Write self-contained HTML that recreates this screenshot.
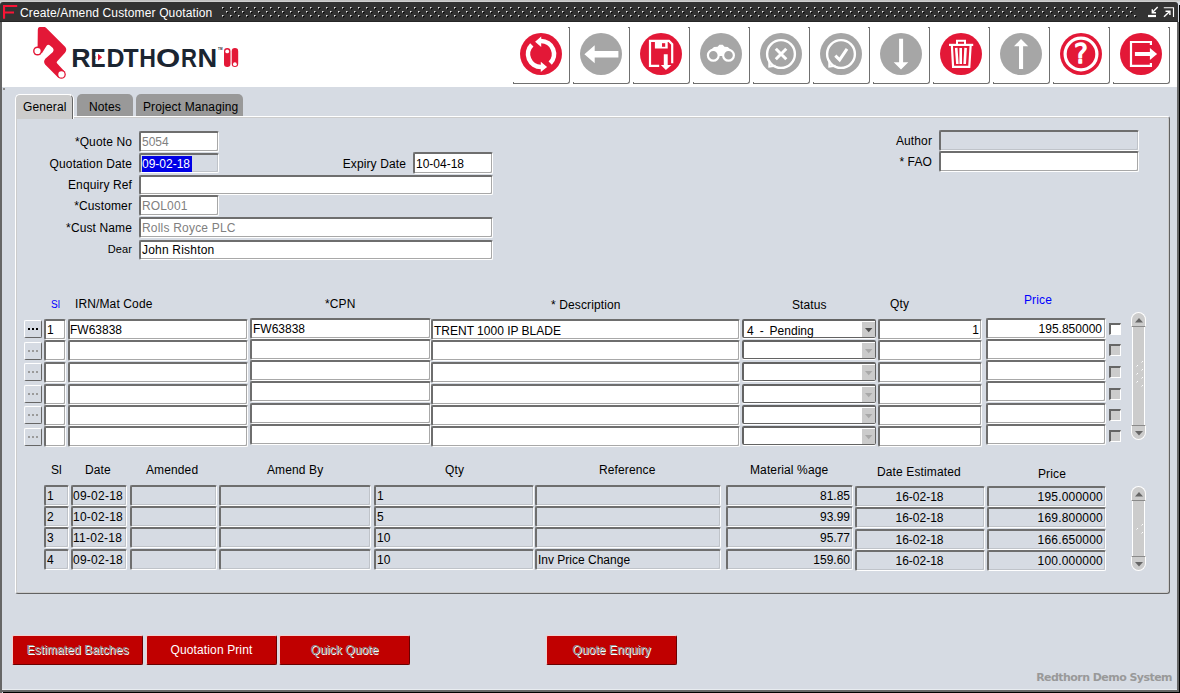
<!DOCTYPE html>
<html lang="en"><head><meta charset="utf-8"><title>Create/Amend Customer Quotation</title>
<style>
*{box-sizing:border-box}
html,body{margin:0;padding:0}
body{width:1180px;height:693px;overflow:hidden;position:relative;background:#d6dbe3;font-family:"Liberation Sans",Arial,sans-serif;font-size:12px;color:#000;letter-spacing:0.12px}
.a{position:absolute}
.t{position:absolute;white-space:pre;line-height:14px;height:14px}
.r{text-align:right}
.c{text-align:center}
.f{position:absolute;background:#fff;border-style:solid;border-width:2px 1px 1px 2px;border-color:#6e6e6e #fff #fff #6e6e6e;border-radius:2px;box-shadow:inset -1px -1px 0 #a8a8a8;white-space:pre;line-height:14px;padding:2px 0 0 1px;overflow:hidden;letter-spacing:0}
.g{box-shadow:inset -1px -1px 0 #bfc3c9}
.g{background:#d6dbe3}
.dis{color:#808080}
.tb{position:absolute;top:27px;width:57px;height:57px;border-right:1px solid #707070;border-bottom:1px solid #707070;border-bottom-right-radius:3px;background:#fff}
.tb svg{position:absolute;left:7px;top:6px}
.tb:before{content:'';position:absolute;right:0;top:0;width:1px;height:1px;background:#707070}
.tb:after{content:'';position:absolute;left:0;bottom:0;width:1px;height:1px;background:#707070}
.rb{position:absolute;top:635px;height:30px;width:131px;background:#c00000;color:#fff;text-align:center;line-height:28px;border-style:solid;border-width:1px;border-color:#f4d0d0 #6a0000 #6a0000 #f4d0d0;border-radius:2px}
.bl{color:#00f}
</style></head>
<body>
<div class="a" style="left:0;top:0;width:1180px;height:2px;background:linear-gradient(#bcbcbc,#d6d6d6)"></div>
<div class="a" style="left:0;top:2px;width:1178px;height:20px;background:#333;border-top-left-radius:3px;border-top-right-radius:3px"></div>
<svg class="a" style="left:222px;top:7px" width="916" height="12"><defs><pattern id="dp" width="8" height="8" patternUnits="userSpaceOnUse"><rect x="0" y="0" width="1" height="1" fill="#ececec"/><rect x="1" y="0" width="1" height="1" fill="#8c8c8c"/><rect x="0" y="1" width="1" height="1" fill="#8c8c8c"/><rect x="1" y="1" width="1" height="1" fill="#000"/><rect x="2" y="1" width="1" height="1" fill="#1c1c1c"/><rect x="1" y="2" width="1" height="1" fill="#1c1c1c"/><rect x="4" y="4" width="1" height="1" fill="#ececec"/><rect x="5" y="4" width="1" height="1" fill="#8c8c8c"/><rect x="4" y="5" width="1" height="1" fill="#8c8c8c"/><rect x="5" y="5" width="1" height="1" fill="#000"/><rect x="6" y="5" width="1" height="1" fill="#1c1c1c"/><rect x="5" y="6" width="1" height="1" fill="#1c1c1c"/></pattern></defs><rect width="915" height="11" fill="url(#dp)"/></svg>
<div class="a" style="left:0;top:21px;width:1178px;height:1px;background:#262626"></div>
<svg class="a" style="left:3px;top:5px" width="15" height="15"><path d="M1 13.8V1H14.2M1 7.5H11" fill="none" stroke="#fa1436" stroke-width="2.2"/></svg>
<div class="t" style="left:20px;top:6px;color:#fff;letter-spacing:0.14px">Create/Amend Customer Quotation</div>
<svg class="a" style="left:1148px;top:5px" width="28" height="14"><g stroke="#fff" fill="none"><path d="M9.7 2.1L4.6 7.3" stroke-width="1.4"/><path d="M4.3 4.3V7.7H8" stroke-width="1.4"/><path d="M0 11H8" stroke-width="2.2"/><path d="M15.8 2.7H25.5V11.9" stroke-width="1.15"/><path d="M16 11.7L21.6 6.5" stroke-width="1.4"/><path d="M17.5 6.2H21.9V9.9" stroke-width="1.4"/></g></svg>
<div class="a" style="left:0;top:22px;width:2px;height:671px;background:#666"></div>
<div class="a" style="left:1177px;top:22px;width:2px;height:671px;background:#666"></div>
<div class="a" style="left:1179px;top:5px;width:1px;height:688px;background:#000"></div>
<div class="a" style="left:2px;top:689px;width:1175px;height:1px;background:#e8ecf0"></div>
<div class="a" style="left:1px;top:690px;width:1178px;height:2px;background:#666"></div>
<div class="a" style="left:3px;top:692px;width:1177px;height:1px;background:#000"></div>
<div class="a" style="left:3px;top:88px;width:2px;height:2px;background:#8a8a8a"></div>
<div class="a" style="left:2px;top:22px;width:1175px;height:65px;background:#fff"></div>
<svg class="a" style="left:25px;top:22px" width="220" height="62" viewBox="0 0 220 62"><path d="M14.6 5L19.6 5Q20.3 5 21 5.8L40.3 25.1Q42.4 28 40 30.7L32 39.4Q31.3 40.3 32 41.2L39.6 49.6L33.3 55.8L20.1 42.4Q18 39.6 20.3 36.8L27.9 29.9Q29.4 28 27.9 26L24.7 23.2Q22.9 22 21.6 23.8L16.9 31.3L12.55 29L12.8 7.8Q12.8 5 14.6 5Z" fill="#e31837"/><circle cx="12.55" cy="29" r="4.5" fill="#e31837"/><circle cx="12.55" cy="29" r="3.1" fill="#fff"/><circle cx="36.4" cy="52.4" r="4.4" fill="#e31837"/><circle cx="36.4" cy="52.4" r="3.1" fill="#fff"/><text y="45" font-family="Liberation Sans,Arial,sans-serif" font-weight="bold" font-size="26" fill="#1b2531" letter-spacing="0"><tspan x="46.25" textLength="19.34" lengthAdjust="spacingAndGlyphs">R</tspan><tspan x="65.62" textLength="15.09" lengthAdjust="spacingAndGlyphs">E</tspan><tspan x="81.57" textLength="17.95" lengthAdjust="spacingAndGlyphs">D</tspan><tspan x="98.21" textLength="15.36" lengthAdjust="spacingAndGlyphs">T</tspan><tspan x="114.29" textLength="16.69" lengthAdjust="spacingAndGlyphs">H</tspan><tspan x="131.08" textLength="24.27" lengthAdjust="spacingAndGlyphs">O</tspan><tspan x="155.96" textLength="15.96" lengthAdjust="spacingAndGlyphs">R</tspan><tspan x="172.5" textLength="19.7" lengthAdjust="spacingAndGlyphs">N</tspan></text><rect x="70.5" y="32.3" width="11.9" height="6" fill="#fff"/><path d="M73 31.8L77.2 35.3L73 38.8Z" fill="#e31837"/><text x="193" y="28.2" font-family="Liberation Sans,Arial,sans-serif" font-weight="bold" font-size="3" fill="#1b2531">TM</text><rect x="199" y="26" width="6.5" height="19" rx="3.2" fill="#e31837"/><rect x="206.7" y="26" width="6.5" height="19" rx="3.2" fill="#e31837"/><circle cx="202.2" cy="29.4" r="1.9" fill="#fff"/><circle cx="209.9" cy="42.2" r="1.9" fill="#fff"/></svg>
<div class="tb" style="left:513px"><svg width="42" height="42" viewBox="0 0 42 42"><circle cx="21" cy="21" r="21" fill="#e31837"/><g fill="none" stroke="#fff" stroke-width="4.6"><path d="M30.2 30.2A13 13 0 0 0 21 8"/><path d="M11.8 11.8A13 13 0 0 0 21 34"/></g><path d="M15.1 8.7L21.2 3.6V13.9Z M27.1 34L20.8 28.8V39Z" fill="#fff"/></svg></div>
<div class="tb" style="left:573px"><svg width="42" height="42" viewBox="0 0 42 42"><circle cx="21" cy="21" r="21" fill="#a6a6a6"/><path d="M4.4 21.2L14.7 12.2V18H38.4V24.4H14.7V30.2Z" fill="#fff"/></svg></div>
<div class="tb" style="left:633px"><svg width="42" height="42" viewBox="0 0 42 42"><circle cx="21" cy="21" r="21" fill="#e31837"/><path d="M19.2 32.8H10V7.9H29L32.2 11.1V30.2" fill="none" stroke="#fff" stroke-width="2.2"/><rect x="14.9" y="8.5" width="12.8" height="7" fill="#fff"/><rect x="22" y="10.2" width="3.2" height="3.6" fill="#e31837"/><path d="M23.8 21.3H27.7V32.1H31.4L25.9 37.1L20.9 32.1H23.8Z" fill="#fff"/></svg></div>
<div class="tb" style="left:693px"><svg width="42" height="42" viewBox="0 0 42 42"><circle cx="21" cy="21" r="21" fill="#a6a6a6"/><path d="M9.5 18L14 14L17.6 13.7L19.4 11.8H22.7L24.5 13.7L27.7 14L32.3 18L25 20L22.8 23H19.2L17 20Z" fill="#fff"/><circle cx="13.3" cy="22.3" r="5.4" fill="#a6a6a6" stroke="#fff" stroke-width="2.2"/><circle cx="28.5" cy="22.3" r="5.4" fill="#a6a6a6" stroke="#fff" stroke-width="2.2"/></svg></div>
<div class="tb" style="left:753px"><svg width="42" height="42" viewBox="0 0 42 42"><circle cx="21" cy="21" r="21" fill="#a6a6a6"/><circle cx="21" cy="21" r="13.9" fill="none" stroke="#fff" stroke-width="2.4"/><path d="M9.3 27.5L9.3 33.6L15.5 32.8" fill="none" stroke="#fff" stroke-width="2"/><path d="M15.8 15.8L26.3 26.3M26.3 15.8L15.8 26.3" stroke="#fff" stroke-width="3"/></svg></div>
<div class="tb" style="left:813px"><svg width="42" height="42" viewBox="0 0 42 42"><circle cx="21" cy="21" r="21" fill="#a6a6a6"/><circle cx="21" cy="21" r="13.9" fill="none" stroke="#fff" stroke-width="2.4"/><path d="M9.3 27.5L9.3 33.6L15.5 32.8" fill="none" stroke="#fff" stroke-width="2"/><path d="M15.3 22.6L19.6 26.8L27 15.9" fill="none" stroke="#fff" stroke-width="3"/></svg></div>
<div class="tb" style="left:873px"><svg width="42" height="42" viewBox="0 0 42 42"><circle cx="21" cy="21" r="21" fill="#a6a6a6"/><path d="M19.1 5.7H23.1V29.2H28.3L21 36.4L13.7 29.2H19.1Z" fill="#fff"/></svg></div>
<div class="tb" style="left:933px"><svg width="42" height="42" viewBox="0 0 42 42"><circle cx="21" cy="21" r="21" fill="#e31837"/><g fill="none" stroke="#fff"><path d="M9 11.9H33.2" stroke-width="2.2"/><path d="M17 11V7.8H25V11" stroke-width="2"/><path d="M11.9 13L13.1 33.9H29.3L30.6 13" stroke-width="2.2"/><path d="M16.2 14.9L17.4 31M20.7 14.9V31M25.6 14.9L24.7 31" stroke-width="2.6"/></g></svg></div>
<div class="tb" style="left:993px"><svg width="42" height="42" viewBox="0 0 42 42"><circle cx="21" cy="21" r="21" fill="#a6a6a6"/><path d="M19 36H23.1V13.2H28.2L21 6L14 13.2H19Z" fill="#fff"/></svg></div>
<div class="tb" style="left:1053px"><svg width="42" height="42" viewBox="0 0 42 42"><circle cx="21" cy="21" r="21" fill="#e31837"/><circle cx="21" cy="21" r="15.9" fill="none" stroke="#fff" stroke-width="3.2"/><text x="20.9" y="30.4" text-anchor="middle" font-family="DejaVu Sans,Liberation Sans,sans-serif" font-size="26" fill="#fff" stroke="#fff" stroke-width="1.3" stroke-linejoin="round" letter-spacing="0">?</text></svg></div>
<div class="tb" style="left:1113px"><svg width="42" height="42" viewBox="0 0 42 42"><circle cx="21" cy="21" r="21" fill="#e31837"/><path d="M30.9 11.9V9H11V32.9H30.9V29.9" fill="none" stroke="#fff" stroke-width="2.2"/><path d="M14.9 19.1H29.9V14.9L37.1 21L29.9 27V23.1H14.9Z" fill="#fff"/></svg></div>
<div class="a" style="left:77px;top:94px;width:56px;height:23px;background:#999;border-radius:5px 5px 0 0"></div>
<div class="a" style="left:136px;top:94px;width:107px;height:23px;background:#999;border-radius:5px 5px 0 0"></div>
<div class="t" style="left:89px;top:100px">Notes</div>
<div class="t" style="left:143px;top:100px">Project Managing</div>
<div class="a" style="left:15px;top:116px;width:1155px;height:478px;background:#d6dbe3;border-style:solid;border-width:1px;border-color:#fff #626262 #626262 #fff;border-radius:0 3px 3px 3px;box-shadow:inset -1px -1px 0 #ccc,inset 1px 1px 0 #ccc"></div>
<div class="a" style="left:15px;top:94px;width:58px;height:25px;background:#ccc;border-radius:5px 5px 0 0;border-style:solid;border-width:1px 1px 0 1px;border-color:#fff #666 #fff #fff;box-shadow:1px 0 0 #fff"></div>
<div class="t" style="left:23px;top:100px">General</div>
<div class="t r" style="right:1048px;top:135px;">*Quote No</div>
<div class="t r" style="right:1048px;top:157px;">Quotation Date</div>
<div class="t r" style="right:1048px;top:178px;">Enquiry Ref</div>
<div class="t r" style="right:1048px;top:199px;">*Customer</div>
<div class="t r" style="right:1048px;top:221px;">*Cust Name</div>
<div class="t r" style="right:1048px;top:242px;font-size:11px">Dear</div>
<div class="t r" style="right:774px;top:157px;">Expiry Date</div>
<div class="t r" style="right:248px;top:134px;">Author</div>
<div class="t r" style="right:248px;top:155px;">* FAO</div>
<div class="f dis" style="left:139px;top:131px;width:80px;height:21px;">5054</div>
<div class="f g" style="left:139px;top:153px;width:80px;height:20px;padding:2px 0 0 1px"><span style="background:#0000e6;color:#fff;display:inline-block;height:16px;line-height:16px;margin-top:-2px;width:50px">09-02-18</span></div>
<div class="f " style="left:413px;top:152px;width:80px;height:22px;padding-top:3px">10-04-18</div>
<div class="f " style="left:139px;top:175px;width:354px;height:20px;"></div>
<div class="f dis" style="left:139px;top:195px;width:80px;height:21px;letter-spacing:.15px">ROL001</div>
<div class="f dis" style="left:139px;top:217px;width:354px;height:21px;letter-spacing:.2px">Rolls Royce PLC</div>
<div class="f " style="left:139px;top:240px;width:354px;height:20px;padding-top:1px;letter-spacing:.2px">John Rishton</div>
<div class="f g" style="left:939px;top:130px;width:200px;height:21px;"></div>
<div class="f " style="left:939px;top:151px;width:200px;height:21px;"></div>
<div class="t bl" style="left:51px;top:298px;font-size:10px">Sl</div>
<div class="t" style="left:75px;top:297px">IRN/Mat Code</div>
<div class="t" style="left:325px;top:297px">*CPN</div>
<div class="t" style="left:551px;top:298px">* Description</div>
<div class="t" style="left:792px;top:298px">Status</div>
<div class="t" style="left:890px;top:297px">Qty</div>
<div class="t bl" style="left:1024px;top:293px">Price</div>
<div class="a" style="left:24px;top:320px;width:18px;height:18px;background:#d6dbe3;border-style:solid;border-width:1px;border-color:#fff #666 #666 #fff;border-radius:2px"><i class="a" style="left:3px;top:7px;width:2px;height:2px;background:#000"></i><i class="a" style="left:7px;top:7px;width:2px;height:2px;background:#000"></i><i class="a" style="left:11px;top:7px;width:2px;height:2px;background:#000"></i></div>
<div class="f " style="left:44px;top:319px;width:22px;height:21px;padding-left:1px">1</div>
<div class="f " style="left:68px;top:319px;width:180px;height:21px;padding-left:0">FW63838</div>
<div class="f " style="left:250px;top:318px;width:181px;height:21px;padding-top:2px">FW63838</div>
<div class="f " style="left:431px;top:319px;width:309px;height:21px;padding:3px 0 0 1px">TRENT 1000 IP BLADE</div>
<div class="f" style="left:742px;top:319px;width:134px;height:19px;overflow:visible;border-color:#636363;box-shadow:0 1px 0 #fff;padding:3px 0 0 3px;word-spacing:-0.35px">4  -  Pending<div class="a" style="right:0;top:1px;width:13px;height:15px;background:#cbcbcb"><svg class="a" style="left:3px;top:6px" width="8" height="5"><path d="M0 0H7.4L3.7 4.2Z" fill="#505050"/></svg></div></div>
<div class="f r" style="left:878px;top:319px;width:104px;height:21px;padding:2px 2px 0 0">1</div>
<div class="f r" style="left:986px;top:318px;width:120px;height:21px;padding:2px 3px 0 0">195.850000</div>
<div class="a" style="left:1109px;top:323px;width:12px;height:12px;background:#fff;border-style:solid;border-width:2px 1px 1px 2px;border-color:#666 #fff #fff #666"></div>
<div class="a" style="left:24px;top:342px;width:18px;height:18px;background:#d6dbe3;border-style:solid;border-width:1px;border-color:#fff #666 #666 #fff;border-radius:2px"><i class="a" style="left:3px;top:7px;width:2px;height:2px;background:#9a9a9a"></i><i class="a" style="left:7px;top:7px;width:2px;height:2px;background:#9a9a9a"></i><i class="a" style="left:11px;top:7px;width:2px;height:2px;background:#9a9a9a"></i></div>
<div class="f " style="left:44px;top:340px;width:22px;height:21px;padding-left:1px"></div>
<div class="f " style="left:68px;top:340px;width:180px;height:21px;padding-left:0"></div>
<div class="f " style="left:250px;top:339px;width:181px;height:21px;padding-top:2px"></div>
<div class="f " style="left:431px;top:340px;width:309px;height:21px;padding:3px 0 0 1px"></div>
<div class="f" style="left:742px;top:340px;width:134px;height:19px;overflow:visible;border-color:#636363;box-shadow:0 1px 0 #fff;padding:3px 0 0 3px;word-spacing:-0.35px"><div class="a" style="right:0;top:1px;width:13px;height:15px;background:#cbcbcb"><svg class="a" style="left:3px;top:6px" width="8" height="5"><path d="M0 0H7.4L3.7 4.2Z" fill="#a8a8a8"/></svg></div></div>
<div class="f r" style="left:878px;top:340px;width:104px;height:21px;padding:2px 2px 0 0"></div>
<div class="f r" style="left:986px;top:339px;width:120px;height:21px;padding:2px 3px 0 0"></div>
<div class="a" style="left:1109px;top:344px;width:12px;height:12px;background:#ccc;border-style:solid;border-width:2px 1px 1px 2px;border-color:#666 #fff #fff #666"></div>
<div class="a" style="left:24px;top:363px;width:18px;height:18px;background:#d6dbe3;border-style:solid;border-width:1px;border-color:#fff #666 #666 #fff;border-radius:2px"><i class="a" style="left:3px;top:7px;width:2px;height:2px;background:#9a9a9a"></i><i class="a" style="left:7px;top:7px;width:2px;height:2px;background:#9a9a9a"></i><i class="a" style="left:11px;top:7px;width:2px;height:2px;background:#9a9a9a"></i></div>
<div class="f " style="left:44px;top:362px;width:22px;height:21px;padding-left:1px"></div>
<div class="f " style="left:68px;top:362px;width:180px;height:21px;padding-left:0"></div>
<div class="f " style="left:250px;top:360px;width:181px;height:21px;padding-top:2px"></div>
<div class="f " style="left:431px;top:362px;width:309px;height:21px;padding:3px 0 0 1px"></div>
<div class="f" style="left:742px;top:362px;width:134px;height:19px;overflow:visible;border-color:#636363;box-shadow:0 1px 0 #fff;padding:3px 0 0 3px;word-spacing:-0.35px"><div class="a" style="right:0;top:1px;width:13px;height:15px;background:#cbcbcb"><svg class="a" style="left:3px;top:6px" width="8" height="5"><path d="M0 0H7.4L3.7 4.2Z" fill="#a8a8a8"/></svg></div></div>
<div class="f r" style="left:878px;top:362px;width:104px;height:21px;padding:2px 2px 0 0"></div>
<div class="f r" style="left:986px;top:360px;width:120px;height:21px;padding:2px 3px 0 0"></div>
<div class="a" style="left:1109px;top:366px;width:12px;height:12px;background:#ccc;border-style:solid;border-width:2px 1px 1px 2px;border-color:#666 #fff #fff #666"></div>
<div class="a" style="left:24px;top:385px;width:18px;height:18px;background:#d6dbe3;border-style:solid;border-width:1px;border-color:#fff #666 #666 #fff;border-radius:2px"><i class="a" style="left:3px;top:7px;width:2px;height:2px;background:#9a9a9a"></i><i class="a" style="left:7px;top:7px;width:2px;height:2px;background:#9a9a9a"></i><i class="a" style="left:11px;top:7px;width:2px;height:2px;background:#9a9a9a"></i></div>
<div class="f " style="left:44px;top:384px;width:22px;height:21px;padding-left:1px"></div>
<div class="f " style="left:68px;top:384px;width:180px;height:21px;padding-left:0"></div>
<div class="f " style="left:250px;top:381px;width:181px;height:21px;padding-top:2px"></div>
<div class="f " style="left:431px;top:384px;width:309px;height:21px;padding:3px 0 0 1px"></div>
<div class="f" style="left:742px;top:384px;width:134px;height:19px;overflow:visible;border-color:#636363;box-shadow:0 1px 0 #fff;padding:3px 0 0 3px;word-spacing:-0.35px"><div class="a" style="right:0;top:1px;width:13px;height:15px;background:#cbcbcb"><svg class="a" style="left:3px;top:6px" width="8" height="5"><path d="M0 0H7.4L3.7 4.2Z" fill="#a8a8a8"/></svg></div></div>
<div class="f r" style="left:878px;top:384px;width:104px;height:21px;padding:2px 2px 0 0"></div>
<div class="f r" style="left:986px;top:381px;width:120px;height:21px;padding:2px 3px 0 0"></div>
<div class="a" style="left:1109px;top:388px;width:12px;height:12px;background:#ccc;border-style:solid;border-width:2px 1px 1px 2px;border-color:#666 #fff #fff #666"></div>
<div class="a" style="left:24px;top:406px;width:18px;height:18px;background:#d6dbe3;border-style:solid;border-width:1px;border-color:#fff #666 #666 #fff;border-radius:2px"><i class="a" style="left:3px;top:7px;width:2px;height:2px;background:#9a9a9a"></i><i class="a" style="left:7px;top:7px;width:2px;height:2px;background:#9a9a9a"></i><i class="a" style="left:11px;top:7px;width:2px;height:2px;background:#9a9a9a"></i></div>
<div class="f " style="left:44px;top:405px;width:22px;height:21px;padding-left:1px"></div>
<div class="f " style="left:68px;top:405px;width:180px;height:21px;padding-left:0"></div>
<div class="f " style="left:250px;top:403px;width:181px;height:21px;padding-top:2px"></div>
<div class="f " style="left:431px;top:405px;width:309px;height:21px;padding:3px 0 0 1px"></div>
<div class="f" style="left:742px;top:405px;width:134px;height:19px;overflow:visible;border-color:#636363;box-shadow:0 1px 0 #fff;padding:3px 0 0 3px;word-spacing:-0.35px"><div class="a" style="right:0;top:1px;width:13px;height:15px;background:#cbcbcb"><svg class="a" style="left:3px;top:6px" width="8" height="5"><path d="M0 0H7.4L3.7 4.2Z" fill="#a8a8a8"/></svg></div></div>
<div class="f r" style="left:878px;top:405px;width:104px;height:21px;padding:2px 2px 0 0"></div>
<div class="f r" style="left:986px;top:403px;width:120px;height:21px;padding:2px 3px 0 0"></div>
<div class="a" style="left:1109px;top:409px;width:12px;height:12px;background:#ccc;border-style:solid;border-width:2px 1px 1px 2px;border-color:#666 #fff #fff #666"></div>
<div class="a" style="left:24px;top:428px;width:18px;height:18px;background:#d6dbe3;border-style:solid;border-width:1px;border-color:#fff #666 #666 #fff;border-radius:2px"><i class="a" style="left:3px;top:7px;width:2px;height:2px;background:#9a9a9a"></i><i class="a" style="left:7px;top:7px;width:2px;height:2px;background:#9a9a9a"></i><i class="a" style="left:11px;top:7px;width:2px;height:2px;background:#9a9a9a"></i></div>
<div class="f " style="left:44px;top:426px;width:22px;height:21px;padding-left:1px"></div>
<div class="f " style="left:68px;top:426px;width:180px;height:21px;padding-left:0"></div>
<div class="f " style="left:250px;top:424px;width:181px;height:21px;padding-top:2px"></div>
<div class="f " style="left:431px;top:426px;width:309px;height:21px;padding:3px 0 0 1px"></div>
<div class="f" style="left:742px;top:426px;width:134px;height:19px;overflow:visible;border-color:#636363;box-shadow:0 1px 0 #fff;padding:3px 0 0 3px;word-spacing:-0.35px"><div class="a" style="right:0;top:1px;width:13px;height:15px;background:#cbcbcb"><svg class="a" style="left:3px;top:6px" width="8" height="5"><path d="M0 0H7.4L3.7 4.2Z" fill="#a8a8a8"/></svg></div></div>
<div class="f r" style="left:878px;top:426px;width:104px;height:21px;padding:2px 2px 0 0"></div>
<div class="f r" style="left:986px;top:424px;width:120px;height:21px;padding:2px 3px 0 0"></div>
<div class="a" style="left:1109px;top:430px;width:12px;height:12px;background:#ccc;border-style:solid;border-width:2px 1px 1px 2px;border-color:#666 #fff #fff #666"></div>
<div class="a" style="left:1132px;top:320px;width:13px;height:112px;background:#ccc;border-left:1px solid #fff;border-right:1px solid #fff"></div><div class="a" style="left:1131px;top:312px;width:15px;height:15px;border:1px solid #fff;border-bottom-color:#8a8a8a;border-radius:8px 8px 0 0;background:#ccc"><svg class="a" style="left:3px;top:5px" width="8" height="5"><path d="M0 4.5H8L4 0Z" fill="#666"/></svg></div><div class="a" style="left:1131px;top:425px;width:15px;height:15px;border:1px solid #fff;border-top-color:#8a8a8a;border-radius:0 0 8px 8px;background:#ccc"><svg class="a" style="left:3px;top:5px" width="8" height="5"><path d="M0 0H8L4 4.5Z" fill="#666"/></svg></div><i class="a" style="left:1142px;top:361px;width:1px;height:1px;background:#fff"></i><i class="a" style="left:1141px;top:362px;width:1px;height:1px;background:#e4e4e4"></i><i class="a" style="left:1137px;top:365px;width:1px;height:1px;background:#fff"></i><i class="a" style="left:1136px;top:366px;width:1px;height:1px;background:#e4e4e4"></i><i class="a" style="left:1142px;top:369px;width:1px;height:1px;background:#fff"></i><i class="a" style="left:1141px;top:370px;width:1px;height:1px;background:#e4e4e4"></i><i class="a" style="left:1137px;top:373px;width:1px;height:1px;background:#fff"></i><i class="a" style="left:1136px;top:374px;width:1px;height:1px;background:#e4e4e4"></i><i class="a" style="left:1142px;top:377px;width:1px;height:1px;background:#fff"></i><i class="a" style="left:1141px;top:378px;width:1px;height:1px;background:#e4e4e4"></i><i class="a" style="left:1137px;top:381px;width:1px;height:1px;background:#fff"></i><i class="a" style="left:1136px;top:382px;width:1px;height:1px;background:#e4e4e4"></i><i class="a" style="left:1142px;top:385px;width:1px;height:1px;background:#fff"></i><i class="a" style="left:1141px;top:386px;width:1px;height:1px;background:#e4e4e4"></i>
<div class="t" style="left:51px;top:463px">Sl</div>
<div class="t" style="left:85px;top:463px">Date</div>
<div class="t" style="left:146px;top:463px">Amended</div>
<div class="t" style="left:267px;top:463px">Amend By</div>
<div class="t" style="left:445px;top:463px">Qty</div>
<div class="t" style="left:599px;top:463px">Reference</div>
<div class="t" style="left:750px;top:463px">Material %age</div>
<div class="t" style="left:877px;top:465px">Date Estimated</div>
<div class="t" style="left:1038px;top:467px">Price</div>
<div class="f g" style="left:44px;top:485px;width:25px;height:21px;">1</div>
<div class="f g" style="left:71px;top:485px;width:56px;height:21px;padding-left:0;letter-spacing:.25px">09-02-18</div>
<div class="f g" style="left:130px;top:485px;width:87px;height:21px;"></div>
<div class="f g" style="left:219px;top:485px;width:152px;height:21px;"></div>
<div class="f g" style="left:374px;top:485px;width:160px;height:21px;">1</div>
<div class="f g" style="left:535px;top:485px;width:186px;height:21px;"></div>
<div class="f g r" style="left:726px;top:485px;width:127px;height:21px;padding:2px 2px 0 0">81.85</div>
<div class="f g c" style="left:855px;top:486px;width:130px;height:21px;padding:2px 2px 0 0">16-02-18</div>
<div class="f g r" style="left:987px;top:486px;width:119px;height:21px;padding:2px 2px 0 0;letter-spacing:.2px">195.000000</div>
<div class="f g" style="left:44px;top:506px;width:25px;height:21px;">2</div>
<div class="f g" style="left:71px;top:506px;width:56px;height:21px;padding-left:0;letter-spacing:.25px">10-02-18</div>
<div class="f g" style="left:130px;top:506px;width:87px;height:21px;"></div>
<div class="f g" style="left:219px;top:506px;width:152px;height:21px;"></div>
<div class="f g" style="left:374px;top:506px;width:160px;height:21px;">5</div>
<div class="f g" style="left:535px;top:506px;width:186px;height:21px;"></div>
<div class="f g r" style="left:726px;top:506px;width:127px;height:21px;padding:2px 2px 0 0">93.99</div>
<div class="f g c" style="left:855px;top:507px;width:130px;height:21px;padding:2px 2px 0 0">16-02-18</div>
<div class="f g r" style="left:987px;top:507px;width:119px;height:21px;padding:2px 2px 0 0;letter-spacing:.2px">169.800000</div>
<div class="f g" style="left:44px;top:527px;width:25px;height:21px;">3</div>
<div class="f g" style="left:71px;top:527px;width:56px;height:21px;padding-left:0;letter-spacing:.25px">11-02-18</div>
<div class="f g" style="left:130px;top:527px;width:87px;height:21px;"></div>
<div class="f g" style="left:219px;top:527px;width:152px;height:21px;"></div>
<div class="f g" style="left:374px;top:527px;width:160px;height:21px;">10</div>
<div class="f g" style="left:535px;top:527px;width:186px;height:21px;"></div>
<div class="f g r" style="left:726px;top:527px;width:127px;height:21px;padding:2px 2px 0 0">95.77</div>
<div class="f g c" style="left:855px;top:529px;width:130px;height:21px;padding:2px 2px 0 0">16-02-18</div>
<div class="f g r" style="left:987px;top:529px;width:119px;height:21px;padding:2px 2px 0 0;letter-spacing:.2px">166.650000</div>
<div class="f g" style="left:44px;top:549px;width:25px;height:21px;">4</div>
<div class="f g" style="left:71px;top:549px;width:56px;height:21px;padding-left:0;letter-spacing:.25px">09-02-18</div>
<div class="f g" style="left:130px;top:549px;width:87px;height:21px;"></div>
<div class="f g" style="left:219px;top:549px;width:152px;height:21px;"></div>
<div class="f g" style="left:374px;top:549px;width:160px;height:21px;">10</div>
<div class="f g" style="left:535px;top:549px;width:186px;height:21px;">Inv Price Change</div>
<div class="f g r" style="left:726px;top:549px;width:127px;height:21px;padding:2px 2px 0 0">159.60</div>
<div class="f g c" style="left:855px;top:550px;width:130px;height:21px;padding:2px 2px 0 0">16-02-18</div>
<div class="f g r" style="left:987px;top:550px;width:119px;height:21px;padding:2px 2px 0 0;letter-spacing:.2px">100.000000</div>
<div class="a" style="left:1132px;top:494px;width:13px;height:69px;background:#ccc;border-left:1px solid #fff;border-right:1px solid #fff"></div><div class="a" style="left:1131px;top:486px;width:15px;height:15px;border:1px solid #fff;border-bottom-color:#8a8a8a;border-radius:8px 8px 0 0;background:#ccc"><svg class="a" style="left:3px;top:5px" width="8" height="5"><path d="M0 4.5H8L4 0Z" fill="#666"/></svg></div><div class="a" style="left:1131px;top:556px;width:15px;height:15px;border:1px solid #fff;border-top-color:#8a8a8a;border-radius:0 0 8px 8px;background:#ccc"><svg class="a" style="left:3px;top:5px" width="8" height="5"><path d="M0 0H8L4 4.5Z" fill="#666"/></svg></div><i class="a" style="left:1142px;top:524px;width:1px;height:1px;background:#fff"></i><i class="a" style="left:1141px;top:525px;width:1px;height:1px;background:#e4e4e4"></i><i class="a" style="left:1137px;top:528px;width:1px;height:1px;background:#fff"></i><i class="a" style="left:1136px;top:529px;width:1px;height:1px;background:#e4e4e4"></i><i class="a" style="left:1142px;top:532px;width:1px;height:1px;background:#fff"></i><i class="a" style="left:1141px;top:533px;width:1px;height:1px;background:#e4e4e4"></i>
<div class="rb" style="left:12px;color:#8e8e8e;text-shadow:1px 1px 0 #fff">Estimated Batches</div>
<div class="rb" style="left:146px">Quotation Print</div>
<div class="rb" style="left:279px;color:#8e8e8e;text-shadow:1px 1px 0 #fff">Quick Quote</div>
<div class="rb" style="left:546px;color:#8e8e8e;text-shadow:1px 1px 0 #fff">Quote Enquiry</div>
<div class="t r" style="right:8px;top:671px;color:#999;font-weight:bold;font-size:11px;font-family:'DejaVu Sans','Liberation Sans',sans-serif;letter-spacing:-0.55px">Redthorn Demo System</div>
</body></html>
